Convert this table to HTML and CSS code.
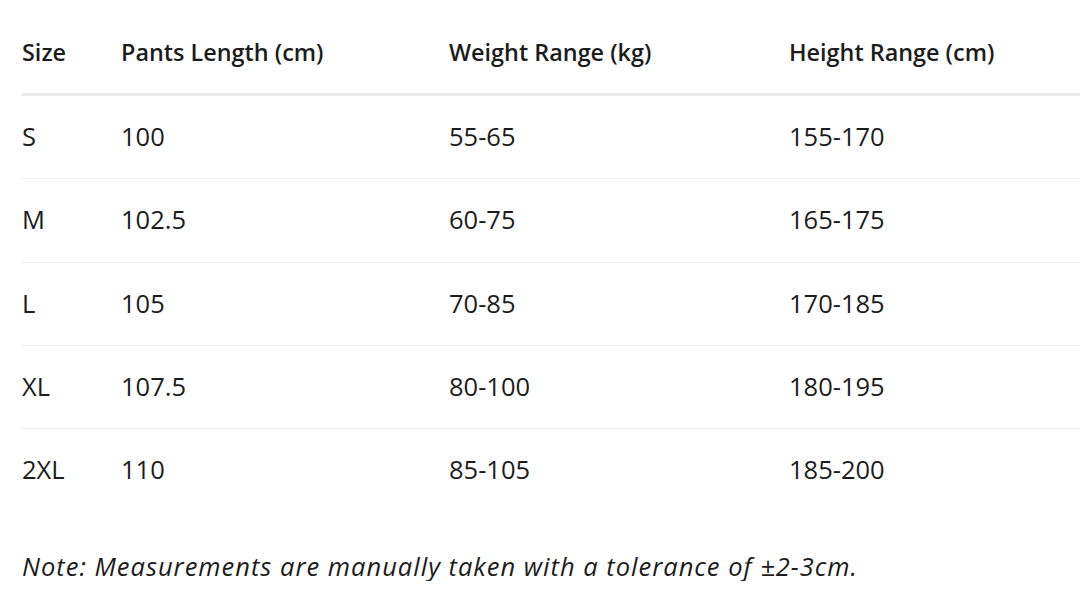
FILE: index.html
```html
<!DOCTYPE html>
<html lang="en">
<head>
<meta charset="utf-8">
<title>Size Chart</title>
<link rel="stylesheet" href="styles.css">
</head>
<body>
<div class="page">
  <table class="chart">
    <colgroup>
      <col class="c1"><col class="c2"><col class="c3"><col class="c4">
    </colgroup>
    <thead>
      <tr><th>Size</th><th>Pants Length (cm)</th><th>Weight Range (kg)</th><th>Height Range (cm)</th></tr>
    </thead>
    <tbody>
      <tr><td>S</td><td>100</td><td>55-65</td><td>155-170</td></tr>
      <tr><td>M</td><td>102.5</td><td>60-75</td><td>165-175</td></tr>
      <tr><td>L</td><td>105</td><td>70-85</td><td>170-185</td></tr>
      <tr><td>XL</td><td>107.5</td><td>80-100</td><td>180-195</td></tr>
      <tr><td>2XL</td><td>110</td><td>85-105</td><td>185-200</td></tr>
    </tbody>
  </table>
  <p class="note">Note: Measurements are manually taken with a tolerance of ±2-3cm.</p>
</div>
</body>
</html>
```
FILE: styles.css
```css
html, body {
  margin: 0;
  padding: 0;
  overflow: hidden;
  background: #fff;
}
.page {
  padding: 12px 0 0 22px;
  font-family: "Open Sans", "Noto Sans", sans-serif;
  font-size: 25.5px;
  color: #1c1c1c;
}
.chart {
  border-collapse: collapse;
  width: 1160px;
  table-layout: fixed;
}
.c1 { width: 99px; }
.c2 { width: 328px; }
.c3 { width: 340px; }
.c4 { width: 393px; }
.chart th, .chart td {
  text-align: left;
  padding: 0 0 2px;
  vertical-align: middle;
  line-height: 30px;
}
.chart th {
  height: 79px;
  font-size: 23.4px;
  font-weight: 600;
  border-bottom: 3px solid #ececec;
}
.chart td {
  height: 80.3px;
  border-bottom: 1px solid #ececec;
}
.chart tbody tr:last-child td {
  border-bottom: none;
}
.note {
  margin: 40px 0 0;
  font-style: italic;
  line-height: 30px;
  letter-spacing: 1px;
}
```
